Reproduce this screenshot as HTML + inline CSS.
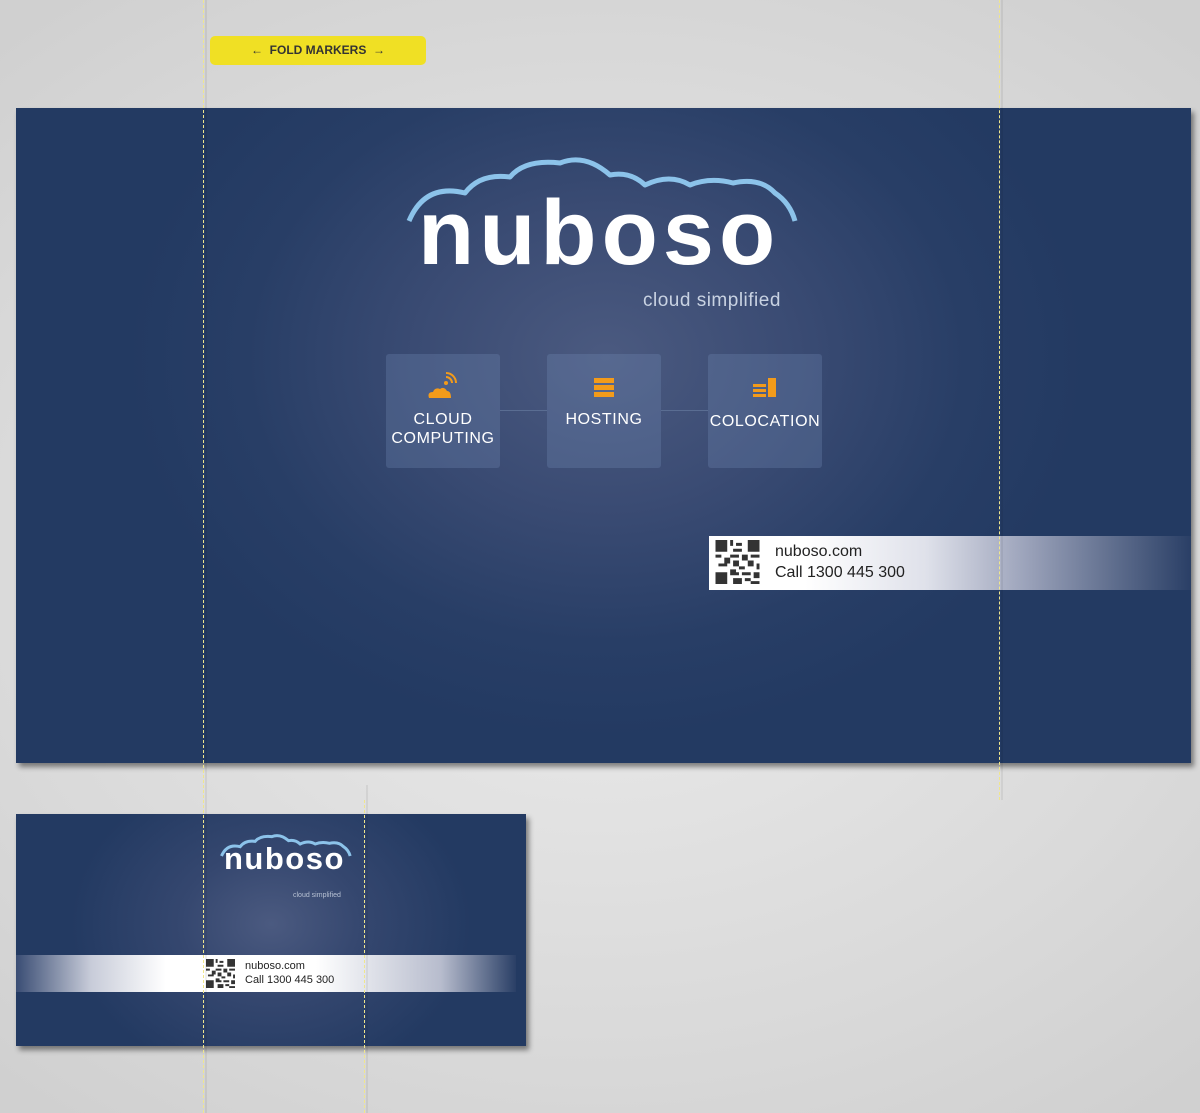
<!DOCTYPE html>
<html><head><meta charset="utf-8"><style>
*{margin:0;padding:0;box-sizing:border-box}
body{width:1200px;height:1113px;overflow:hidden;position:relative;font-family:"Liberation Sans","DejaVu Sans",sans-serif;background:radial-gradient(ellipse 900px 700px at 600px 560px,#ececec,#d9d9d9 70%,#d0d0d0)}
.abs{position:absolute}
.panel{background:radial-gradient(ellipse 480px 380px at 590px 250px,#4b5a80 0%,#3a4b73 40%,#283e66 75%,#233a62 100%);box-shadow:3px 4px 5px rgba(0,0,0,.45)}
.box{position:absolute;top:354px;width:114px;height:114px;background:rgba(120,145,185,.28);border-radius:3px;color:#fff;font-size:16px;letter-spacing:.6px;text-align:center;line-height:19px}
.dash{position:absolute;width:0;border-left:1px dashed #f0e68c}
</style></head><body>
<div class="abs" style="left:210px;top:36px;width:216px;height:29px;background:#f0e024;border-radius:5px;color:#333;font-size:12px;font-weight:bold;text-align:center;line-height:29px">←&nbsp; FOLD MARKERS &nbsp;→</div>

<div class="abs panel" style="left:16px;top:108px;width:1175px;height:655px"></div>
<svg class="abs" style="left:405px;top:155px" width="395" height="120" viewBox="0 0 395 120">
<path d="M4 66 Q20 28 60 38 Q75 18 105 22 Q120 4 155 8 Q180 -2 205 20 Q225 16 240 30 Q265 18 285 30 Q305 22 328 28 Q355 22 370 38 Q385 48 390 66" fill="none" stroke="#8cc3ea" stroke-width="5" stroke-linejoin="round"/>
</svg>
<div class="abs" style="left:418px;top:183px;color:#fff;font-size:92px;letter-spacing:5px;line-height:100px;font-weight:bold">nuboso</div>
<div class="abs" style="left:643px;top:290px;color:#c8d2e2;font-size:19px;letter-spacing:.5px">cloud simplified</div>

<div class="abs" style="left:500px;top:410px;width:47px;height:1px;background:#5a6d92"></div>
<div class="abs" style="left:661px;top:410px;width:47px;height:1px;background:#5a6d92"></div>
<div class="box" style="left:386px"><svg style="margin-top:18px" width="32" height="28" viewBox="0 0 32 28"><path d="M2 26 Q0 20 6 20 Q8 15 13 17 Q17 14 20 19 Q24 19 24 26Z" fill="#f39b1a"/><circle cx="19" cy="11" r="2" fill="#f39b1a"/><path d="M19 5 A6 6 0 0 1 25 11 M19 1 A10 10 0 0 1 29 11" fill="none" stroke="#f39b1a" stroke-width="2"/></svg><div style="margin-top:5px">CLOUD<br>COMPUTING</div></div>
<div class="box" style="left:547px"><div style="margin:24px auto 0;width:20px"><div style="height:5px;background:#f39b1a;margin-bottom:2px"></div><div style="height:5px;background:#f39b1a;margin-bottom:2px"></div><div style="height:5px;background:#f39b1a"></div></div><div style="margin-top:13px">HOSTING</div></div>
<div class="box" style="left:708px"><svg style="margin-top:24px" width="24" height="20" viewBox="0 0 24 20"><rect x="0" y="6" width="13" height="3" fill="#f39b1a"/><rect x="0" y="11" width="13" height="3" fill="#f39b1a"/><rect x="0" y="16" width="13" height="3" fill="#f39b1a"/><rect x="15" y="0" width="8" height="19" fill="#f39b1a"/></svg><div style="margin-top:9px">COLOCATION</div></div>

<div class="abs" style="left:709px;top:536px;width:482px;height:54px;background:linear-gradient(90deg,#fff 0%,#fff 20%,#dfe1ea 45%,#9ea5bc 65%,#2a3f66 100%)"></div>
<svg class="abs" style="left:715px;top:540px" width="45" height="44" viewBox="0 0 15 15"><rect width="15" height="15" fill="#fff"/><path fill="#333" d="M0 0h4v4H0zM11 0h4v4h-4zM0 11h4v4H0zM5 0h1v2H5zM7 1h2v1H7zM6 3h3v1H6zM5 5h3v1H5zM9 5h2v2H9zM0 5h2v1H0zM3 6h2v2H3zM1 8h3v1H1zM6 7h2v2H6zM12 5h3v1h-3zM11 7h2v2h-2zM14 8h1v2h-1zM5 10h2v2H5zM8 9h2v1H8zM9 11h3v1H9zM13 11h2v2h-2zM6 13h3v2H6zM10 13h2v1h-2zM12 14h3v1h-3zM7 11h1v1H7z"/></svg>
<div class="abs" style="left:775px;top:541px;color:#222;font-size:16px;line-height:21px">nuboso.com<br>Call 1300 445 300</div>

<div class="abs panel" style="left:16px;top:814px;width:510px;height:232px;background:radial-gradient(ellipse 200px 160px at 255px 110px,#4b5a80 0%,#35476f 45%,#233a62 100%)"></div>
<svg class="abs" style="left:220px;top:834px" width="132" height="36" viewBox="0 0 395 108"><path d="M4 66 Q20 28 60 38 Q75 18 105 22 Q120 4 155 8 Q180 -2 205 20 Q225 16 240 30 Q265 18 285 30 Q305 22 328 28 Q355 22 370 38 Q385 48 390 66" fill="none" stroke="#8cc3ea" stroke-width="9"/></svg>
<div class="abs" style="left:224px;top:842px;color:#fff;font-size:31px;letter-spacing:1.5px;line-height:34px;font-weight:bold">nuboso</div>
<div class="abs" style="left:293px;top:892px;color:#b7c1d3;font-size:7px">cloud simplified</div>
<div class="abs" style="left:16px;top:955px;width:500px;height:37px;background:linear-gradient(90deg,#3a4d74 0%,#c8ccd9 15%,#fff 30%,#fff 60%,#b7bccd 85%,#2a3f66 100%)"></div>
<svg class="abs" style="left:206px;top:959px" width="29" height="29" viewBox="0 0 15 15"><rect width="15" height="15" fill="#fff"/><path fill="#333" d="M0 0h4v4H0zM11 0h4v4h-4zM0 11h4v4H0zM5 0h1v2H5zM7 1h2v1H7zM6 3h3v1H6zM5 5h3v1H5zM9 5h2v2H9zM0 5h2v1H0zM3 6h2v2H3zM1 8h3v1H1zM6 7h2v2H6zM12 5h3v1h-3zM11 7h2v2h-2zM14 8h1v2h-1zM5 10h2v2H5zM8 9h2v1H8zM9 11h3v1H9zM13 11h2v2h-2zM6 13h3v2H6zM10 13h2v1h-2zM12 14h3v1h-3zM7 11h1v1H7z"/></svg>
<div class="abs" style="left:245px;top:959px;color:#222;font-size:11px;line-height:14px">nuboso.com<br>Call 1300 445 300</div>

<div class="abs" style="left:205px;top:0;width:2px;height:1113px;background:rgba(0,0,0,.06)"></div>
<div class="dash" style="left:203px;top:0;height:1113px"></div>
<div class="abs" style="left:1001px;top:0;width:2px;height:800px;background:rgba(0,0,0,.06)"></div>
<div class="dash" style="left:999px;top:0;height:800px"></div>
<div class="abs" style="left:366px;top:785px;width:2px;height:328px;background:rgba(0,0,0,.06)"></div>
<div class="dash" style="left:364px;top:800px;height:313px"></div>
</body></html>
